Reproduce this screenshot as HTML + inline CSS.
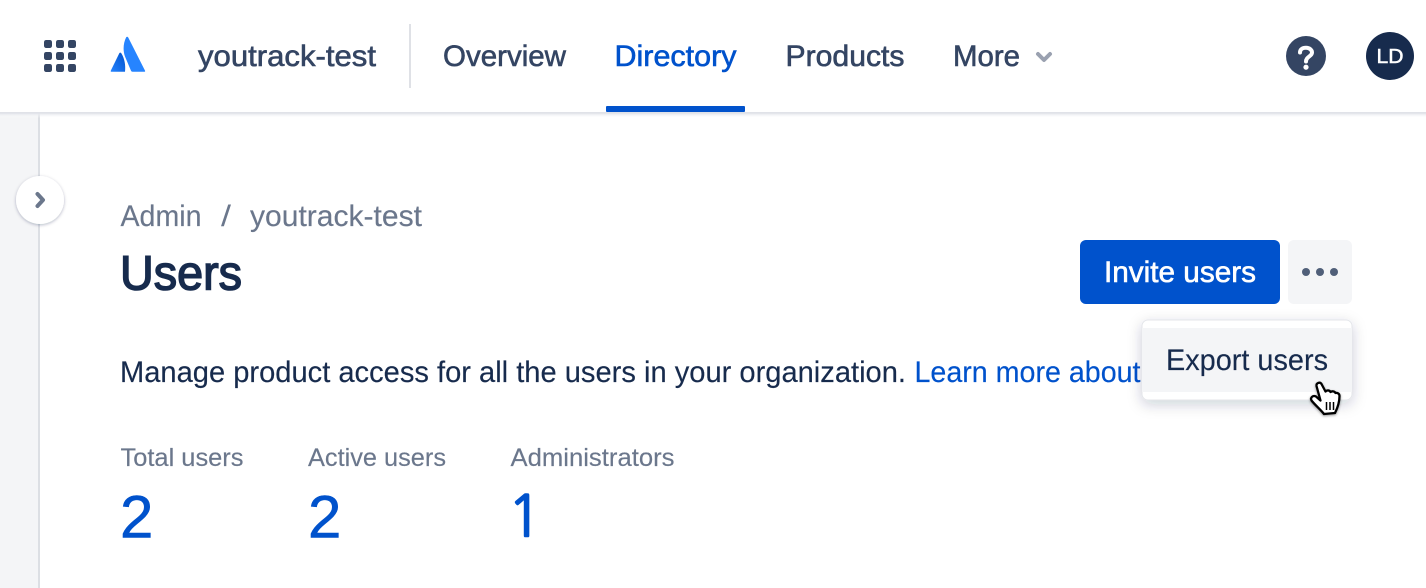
<!DOCTYPE html>
<html><head><meta charset="utf-8"><title>Users</title>
<style>
html,body{margin:0;padding:0;background:#fff;width:1426px;height:588px;overflow:hidden}
svg{display:block}
text{font-family:"Liberation Sans",sans-serif;white-space:pre}
.m{stroke-width:.6px}
.r{stroke-width:.15px}
</style></head><body>
<svg width="1426" height="588" viewBox="0 0 1426 588" xmlns="http://www.w3.org/2000/svg">
<defs>
<linearGradient id="lg" x1="1" y1="0" x2="0" y2="1"><stop offset="0" stop-color="#0052cc"/><stop offset="1" stop-color="#2684ff"/></linearGradient>
<linearGradient id="sh" x1="0" y1="0" x2="0" y2="1"><stop offset="0" stop-color="#e4e6ec"/><stop offset="1" stop-color="#fff" stop-opacity="0"/></linearGradient>
<filter id="ds" x="-30%" y="-30%" width="160%" height="170%"><feDropShadow dx="0" dy="4" stdDeviation="7" flood-color="#091e42" flood-opacity=".2"/></filter>
<filter id="cs" x="-30%" y="-30%" width="160%" height="160%"><feDropShadow dx="0" dy="1" stdDeviation="1.5" flood-color="#091e42" flood-opacity=".3"/></filter>
<filter id="hs" x="-30%" y="-30%" width="160%" height="160%"><feDropShadow dx="0" dy="1" stdDeviation="1.2" flood-color="#000" flood-opacity=".4"/></filter>
</defs>

<!-- sidebar -->
<rect x="0" y="112" width="38" height="476" fill="#f4f5f7"/>
<rect x="38" y="112" width="2" height="476" fill="#dcdfe4"/>
<!-- header -->
<rect x="0" y="0" width="1426" height="112" fill="#fff"/>
<rect x="0" y="112" width="1426" height="1.500" fill="#e0e2e8"/>
<rect x="0" y="113.500" width="1426" height="4.500" fill="url(#sh)"/>

<!-- app grid -->
<g fill="#344563">
<rect x="44" y="40" width="8" height="8" rx="2.200"/><rect x="56" y="40" width="8" height="8" rx="2.200"/><rect x="68" y="40" width="8" height="8" rx="2.200"/>
<rect x="44" y="52" width="8" height="8" rx="2.200"/><rect x="56" y="52" width="8" height="8" rx="2.200"/><rect x="68" y="52" width="8" height="8" rx="2.200"/>
<rect x="44" y="64" width="8" height="8" rx="2.200"/><rect x="56" y="64" width="8" height="8" rx="2.200"/><rect x="68" y="64" width="8" height="8" rx="2.200"/>
</g>
<!-- Atlassian logo -->
<path d="M126.200 37.200 C127 36.400 127.800 36.800 128.300 37.600 L145 70.600 C145.400 71.300 145 71.800 144.300 71.800 L132.500 71.800 C131.800 71.800 131.300 71.400 131 70.800 L125 56.500 C122.800 50.500 123.200 43 126.200 37.200Z" fill="#2684ff"/>
<path d="M119.300 53.200 C119.900 52.400 120.800 52.500 121.300 53.300 C124.500 58.500 125.800 65 125 71.800 L111.500 71.800 C110.800 71.800 110.500 71.200 110.800 70.600 Z" fill="url(#lg)"/>

<text x="198" y="66" font-size="29.500" fill="#344563" stroke="#344563" class="m" textLength="178" lengthAdjust="spacingAndGlyphs">youtrack-test</text>
<rect x="409" y="24" width="2" height="64" fill="#dfe1e6"/>

<text x="443" y="66" font-size="29.500" fill="#344563" stroke="#344563" class="m" textLength="123" lengthAdjust="spacingAndGlyphs">Overview</text>
<text x="614.500" y="66" font-size="29.500" fill="#0052cc" stroke="#0052cc" class="m" textLength="122" lengthAdjust="spacingAndGlyphs">Directory</text>
<rect x="606" y="106" width="139" height="6" rx="1" fill="#0052cc"/>
<text x="785.500" y="66" font-size="29.500" fill="#344563" stroke="#344563" class="m" textLength="119" lengthAdjust="spacingAndGlyphs">Products</text>
<text x="953" y="66" font-size="29.500" fill="#344563" stroke="#344563" class="m" textLength="67" lengthAdjust="spacingAndGlyphs">More</text>
<path d="M1038 54 L1044 60 L1050 54" fill="none" stroke="#9aa1b0" stroke-width="4" stroke-linecap="round" stroke-linejoin="round"/>

<!-- help -->
<circle cx="1306" cy="56" r="20" fill="#344563"/>
<path d="M1300 52.500 C1300 49.500 1302.500 47.800 1306 47.800 C1309.500 47.800 1312 50 1312 52.500 C1312 56.500 1306 56.500 1306 61.500" fill="none" stroke="#fff" stroke-width="4" stroke-linecap="round"/>
<circle cx="1306" cy="67.200" r="2.600" fill="#fff"/>
<!-- avatar -->
<circle cx="1390" cy="56" r="24" fill="#172b4d"/>
<text x="1376.500" y="63" font-size="20" fill="#fff" stroke="#fff" stroke-width=".5" textLength="27" lengthAdjust="spacingAndGlyphs">LD</text>

<!-- expand button -->
<circle cx="40" cy="200" r="24" fill="#fff" filter="url(#cs)"/>
<path d="M37.500 194 L43 200 L37.500 206" fill="none" stroke="#6b778c" stroke-width="4" stroke-linecap="round" stroke-linejoin="round"/>

<!-- breadcrumb -->
<text x="120.500" y="226" font-size="29.500" fill="#6b778c" stroke="#6b778c" class="r" textLength="81" lengthAdjust="spacingAndGlyphs">Admin</text>
<text x="221" y="226" font-size="29.500" fill="#6b778c" textLength="10" lengthAdjust="spacingAndGlyphs">/</text>
<text x="250" y="226" font-size="29.500" fill="#6b778c" stroke="#6b778c" class="r" textLength="172" lengthAdjust="spacingAndGlyphs">youtrack-test</text>

<!-- title -->
<text x="120" y="289.500" font-size="48" fill="#172b4d" stroke="#172b4d" stroke-width="1.500" textLength="122" lengthAdjust="spacingAndGlyphs">Users</text>

<!-- description -->
<text x="120" y="382" font-size="29.500" fill="#172b4d" stroke="#172b4d" class="r" textLength="786" lengthAdjust="spacingAndGlyphs">Manage product access for all the users in your organization.</text>
<text x="914.500" y="382" font-size="29.500" fill="#0052cc" stroke="#0052cc" class="r" textLength="226" lengthAdjust="spacingAndGlyphs">Learn more about</text>

<!-- buttons -->
<rect x="1080" y="240" width="200" height="64" rx="6" fill="#0052cc"/>
<text x="1104" y="282" font-size="29.500" fill="#fff" stroke="#fff" class="m" textLength="152" lengthAdjust="spacingAndGlyphs">Invite users</text>
<rect x="1288" y="240" width="64" height="64" rx="6" fill="#f4f5f7"/>
<circle cx="1306" cy="272" r="4" fill="#505f79"/><circle cx="1320" cy="272" r="4" fill="#505f79"/><circle cx="1334" cy="272" r="4" fill="#505f79"/>

<!-- dropdown -->
<rect x="1142" y="320" width="210" height="80" rx="6" fill="#fff" stroke="#e4e6ea" stroke-width="1" filter="url(#ds)"/>
<rect x="1142" y="328" width="210" height="64" fill="#f4f5f7"/>
<text x="1166" y="370" font-size="29.500" fill="#172b4d" stroke="#172b4d" class="r" textLength="162" lengthAdjust="spacingAndGlyphs">Export users</text>

<!-- hand cursor -->
<g filter="url(#hs)">
<path d="M1316.500 386 C1316 383 1320 381.500 1321.500 384 L1325.500 391.500 C1327 390 1329.500 390 1330.500 392 C1332 391 1334.500 391 1335.500 393 C1337 392.500 1339.500 393.500 1339.500 396 C1339.500 402 1338 407 1335 413 L1324 414 C1321 410 1315 405 1311.500 400.500 C1310 397.500 1313 395 1316 396.500 L1320.500 400.500 Z" fill="#fff" stroke="#000" stroke-width="2.300" stroke-linejoin="round"/>
<path d="M1326.500 402 V410 M1330 402 V410 M1333.500 402 V410" stroke="#000" stroke-width="1.500" fill="none"/>
</g>

<!-- stats -->
<text x="120.500" y="466" font-size="25.300" fill="#6b778c" stroke="#6b778c" class="r" textLength="123" lengthAdjust="spacingAndGlyphs">Total users</text>
<text x="308" y="466" font-size="25.300" fill="#6b778c" stroke="#6b778c" class="r" textLength="138" lengthAdjust="spacingAndGlyphs">Active users</text>
<text x="510.500" y="466" font-size="25.300" fill="#6b778c" stroke="#6b778c" class="r" textLength="164" lengthAdjust="spacingAndGlyphs">Administrators</text>
<text x="120" y="537.300" font-size="60" fill="#0052cc" stroke="#0052cc" stroke-width=".6">2</text>
<text x="308" y="537.300" font-size="60" fill="#0052cc" stroke="#0052cc" stroke-width=".6">2</text>
<text x="507.500" y="536.700" font-size="57" fill="#0052cc" stroke="#0052cc" stroke-width="1.600" style="font-family:'NanumGothic','Liberation Sans',sans-serif">1</text>
</svg>
</body></html>
